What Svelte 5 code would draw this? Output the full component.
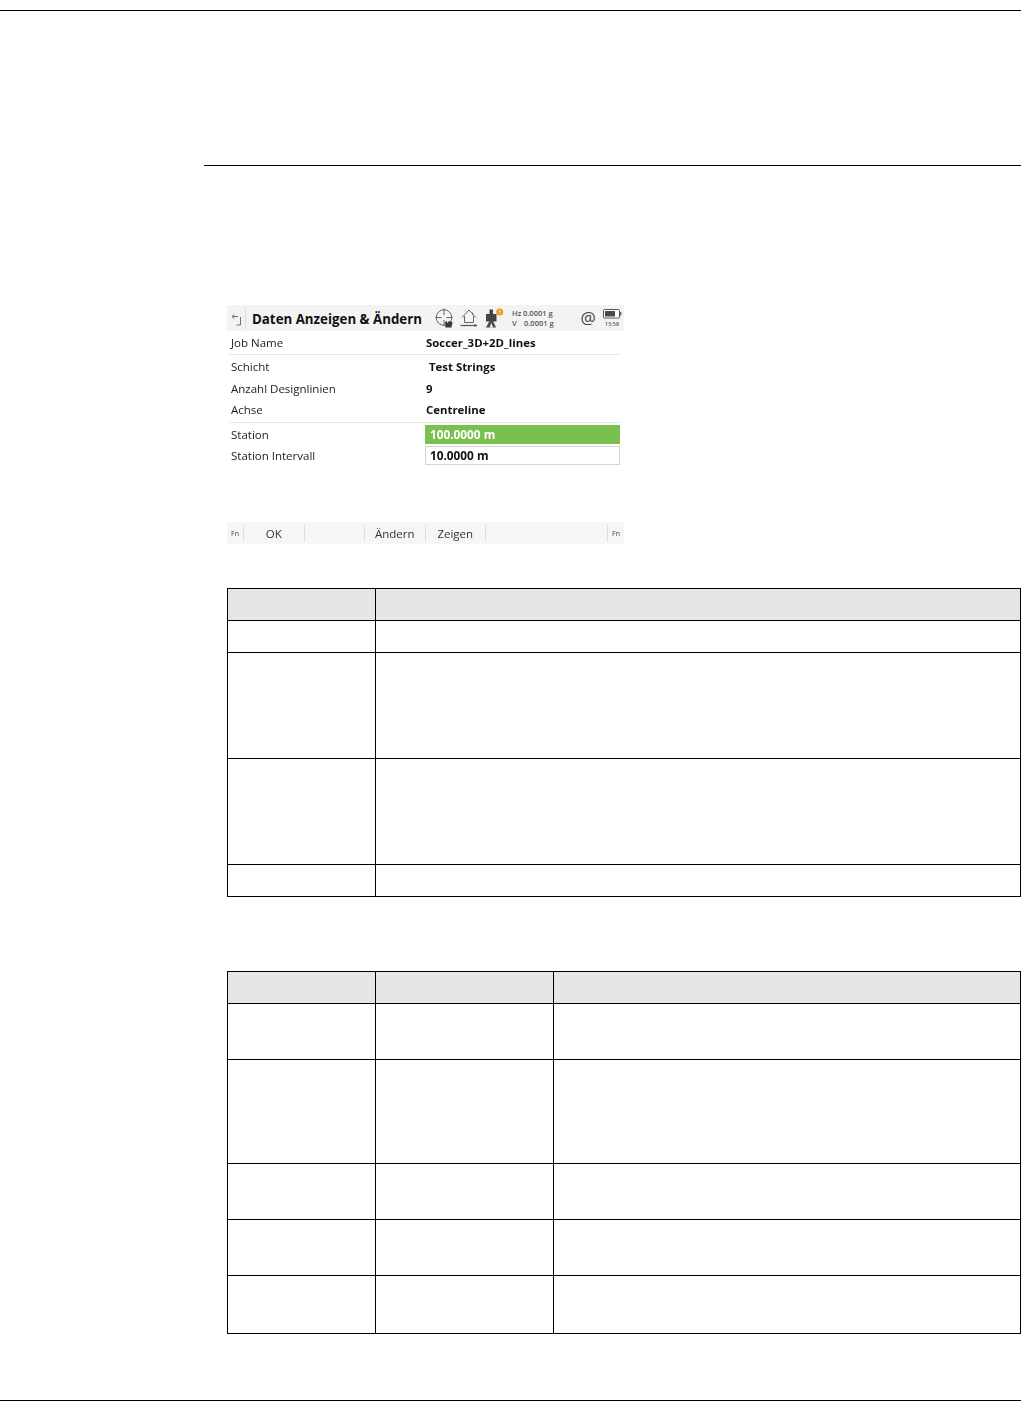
<script>
    const fields = [
        { label: "Schicht", value: "Test Strings", indent: true },
        { label: "Anzahl Designlinien", value: "9" },
        { label: "Achse", value: "Centreline" }
    ];

    // softkeys between the two Fn cells
    const softkeys = ["OK", "", "Ändern", "Zeigen"];

    const table1 = [{ h: 31 }, { h: 105 }, { h: 105 }, { h: 31 }];

    const table2 = [{ h: 55 }, { h: 103 }, { h: 55 }, { h: 55 }, { h: 57 }];
</script>

<div class="page">
    <div class="rule top"></div>
    <div class="rule section"></div>

    <div class="screen">
        <div class="titlebar">
            <svg class="back" width="16" height="20" viewBox="0 0 16 20">
                <path d="M11 8.5 H5 M5 8.5 l2.4 -2.2 M5 8.5 l2.4 2.2 M13.5 9 V17 H9.5" fill="none" stroke="#707070" stroke-width="1" />
            </svg>
            <span class="divider"></span>
            <span class="title">Daten Anzeigen &amp; Ändern</span>
            <svg class="ic-target" width="19" height="20" viewBox="0 0 19 20">
                <circle cx="9" cy="9.5" r="7.8" fill="none" stroke="#666" stroke-width="1" />
                <path d="M9 0.5 V7 M9 12 V18 M0.5 9.5 H6.5 M11.5 9.5 H17.5" stroke="#666" stroke-width="1" />
                <path d="M10.5 19.5 L10 14 L11.5 13 L12.5 15 L14 13 L15.5 13.5 L16.5 13.5 L17.5 14.5 L16.5 19.5 Z" fill="#3a3a3a" />
            </svg>
            <svg class="ic-home" width="18" height="20" viewBox="0 0 18 20">
                <path d="M2 9.5 L9 2 L16 9.5 M4.5 8 V14.5 H13.5 V8 M12.5 4.5 V7" fill="none" stroke="#666" stroke-width="1" />
                <path d="M0.5 17.5 H16" stroke="#555" stroke-width="1.2" />
                <path d="M14.5 15.8 L17.5 17.5 L14.5 19 Z" fill="#555" />
            </svg>
            <svg class="ic-station" width="20" height="20" viewBox="0 0 20 20">
                <rect x="2" y="6" width="10.5" height="7.5" fill="#444" />
                <rect x="5.5" y="1.5" width="3.5" height="5" fill="#444" />
                <path d="M5.5 13 L2 19.5 H12 L9 13 Z" fill="#4a4a4a" />
                <path d="M7.3 15 L5.5 19.5 H9.2 Z" fill="#f3f3f3" />
                <circle cx="15.7" cy="4" r="3.5" fill="#ef9a1f" />
                <path d="M15.7 2.1 V4.4 M15.7 5.2 V6" stroke="#fff" stroke-width="0.9" />
            </svg>
            <div class="angles">
                <div class="angle"><span class="ax">Hz</span><span>0.0001 g</span></div>
                <div class="angle"><span class="ax v">V</span><span>0.0001 g</span></div>
            </div>
            <span class="at">@</span>
            <div class="power">
                <svg width="19" height="10" viewBox="0 0 19 10">
                    <rect x="0.5" y="0.5" width="16" height="8.5" rx="1" fill="#fff" stroke="#555" />
                    <rect x="2" y="2" width="10" height="5.5" fill="#4a4a4a" />
                    <rect x="17" y="3" width="1.4" height="3.5" fill="#666" />
                </svg>
                <span class="clock">15:58</span>
            </div>
        </div>

        <div class="row first">
            <span class="label">Job Name</span>
            <span class="value">Soccer_3D+2D_lines</span>
        </div>
        <div class="sep"></div>

        <div class="group">
            {#each fields as f}
                <div class="row">
                    <span class="label">{f.label}</span>
                    <span class="value" class:indent={f.indent}>{f.value}</span>
                </div>
            {/each}
        </div>
        <div class="sep"></div>

        <div class="inputs">
            <div class="row input">
                <span class="label">Station</span>
                <span class="field active">100.0000 m</span>
            </div>
            <div class="row input">
                <span class="label">Station Intervall</span>
                <span class="field">10.0000 m</span>
            </div>
        </div>

        <div class="softbar">
            <span class="fn">Fn</span>
            {#each softkeys as key}
                <span class="key">{key}</span>
            {/each}
            <span class="spacer"></span>
            <span class="fn right">Fn</span>
        </div>
    </div>

    <table class="t1">
        <colgroup><col class="c1" /><col /></colgroup>
        <thead>
            <tr style="height: 32px"><th></th><th></th></tr>
        </thead>
        <tbody>
            {#each table1 as r}
                <tr style="height: {r.h + 1}px"><td></td><td></td></tr>
            {/each}
        </tbody>
    </table>

    <table class="t2">
        <colgroup><col class="c1" /><col class="c2" /><col /></colgroup>
        <thead>
            <tr style="height: 32px"><th></th><th></th><th></th></tr>
        </thead>
        <tbody>
            {#each table2 as r}
                <tr style="height: {r.h + 1}px"><td></td><td></td><td></td></tr>
            {/each}
        </tbody>
    </table>

    <div class="rule bottom"></div>
</div>

<style>
    :global(body) {
        margin: 0;
        background: #fff;
    }

    .page {
        width: 1021px;
        height: 1402px;
        padding-top: 10px;
        box-sizing: border-box;
        overflow: hidden;
        font-family: "Open Sans", "Noto Sans", sans-serif;
    }

    .rule {
        height: 1px;
        background: #000;
    }
    .section {
        margin: 154px 0 0 204px;
    }
    .bottom {
        margin-top: 66px;
    }

    .screen {
        width: 397px;
        height: 239px;
        margin: 139px 0 0 227px;
        color: #111;
        display: flex;
        flex-direction: column;
        filter: blur(0.35px);
    }

    .titlebar {
        height: 26px;
        flex: none;
        background: #f3f3f3;
        display: flex;
        align-items: center;
    }
    .back {
        flex: none;
    }
    .divider {
        width: 1px;
        height: 22px;
        margin-left: 2px;
        flex: none;
        background: #dedede;
    }
    .title {
        margin-left: 6px;
        padding-top: 2px;
        width: 183px;
        flex: none;
        font-size: 13.3px;
        font-weight: 700;
        white-space: nowrap;
    }
    .ic-target { flex: none; }
    .ic-home { margin-left: 6px; flex: none; }
    .ic-station { margin-left: 6px; flex: none; }

    .angles {
        margin-left: 8px;
        width: 68px;
        flex: none;
        font-size: 7.5px;
        line-height: 10px;
        font-weight: 600;
        color: #555;
    }
    .angle {
        display: flex;
    }
    .ax {
        width: 11px;
    }
    .v {
        width: 12px;
    }
    .at {
        width: 16px;
        flex: none;
        font-size: 17px;
        line-height: 20px;
        color: #444;
        text-align: center;
    }
    .power {
        margin-left: 7px;
        display: flex;
        flex-direction: column;
        align-items: flex-start;
    }
    .power svg {
        display: block;
    }
    .clock {
        margin: 2px 0 0 2px;
        font-size: 5.5px;
        line-height: 6px;
        font-weight: 600;
        color: #555;
    }

    .row {
        display: flex;
        align-items: center;
        padding-left: 4px;
        font-size: 11.5px;
    }
    .label {
        width: 195px;
        flex: none;
        color: #222;
    }
    .value {
        font-weight: 700;
        font-size: 11.4px;
    }
    .indent {
        margin-left: 3px;
    }
    .first {
        height: 23px;
        flex: none;
    }
    .sep {
        height: 1px;
        flex: none;
        margin-left: 2px;
        width: 391px;
        background: #e6e6e6;
    }
    .group {
        flex: none;
        padding-top: 1px;
        padding-bottom: 1px;
    }
    .group .row {
        height: 21.5px;
    }

    .inputs {
        flex: none;
        padding-top: 2px;
        display: flex;
        flex-direction: column;
        gap: 2px;
    }
    .input {
        height: 19px;
    }
    .input .label {
        padding-top: 1px;
    }
    .field {
        width: 195px;
        height: 19px;
        margin-left: -1px;
        padding-left: 4px;
        box-sizing: border-box;
        border: 1px solid #d5d5d5;
        font-size: 11.8px;
        line-height: 17px;
        font-weight: 700;
    }
    .active {
        background: #7ac04f;
        border-color: #7ac04f;
        color: #fff;
    }

    .softbar {
        margin-top: auto;
        height: 22px;
        background: #f6f6f6;
        display: flex;
        align-items: center;
        font-size: 11.5px;
    }
    .fn {
        width: 17px;
        flex: none;
        font-size: 7px;
        text-align: center;
        color: #444;
        line-height: 17px;
        border-right: 1px solid #ddd;
        box-sizing: border-box;
    }
    .fn.right {
        width: 17px;
        border-right: 0;
        border-left: 1px solid #ddd;
    }
    .key {
        width: 60.5px;
        flex: none;
        text-align: center;
        color: #333;
        line-height: 17px;
        height: 17px;
        border-right: 1px solid #ddd;
        box-sizing: border-box;
    }
    .spacer {
        flex: 1;
    }

    table {
        width: 794px;
        margin-left: 227px;
        border-collapse: collapse;
        table-layout: fixed;
    }
    th,
    td {
        border: 1px solid #000;
        padding: 0;
    }
    th {
        background: #e6e6e6;
    }
    .c1 {
        width: 148px;
    }
    .c2 {
        width: 178px;
    }
    .t1 {
        margin-top: 44px;
    }
    .t2 {
        margin-top: 74px;
    }
</style>
